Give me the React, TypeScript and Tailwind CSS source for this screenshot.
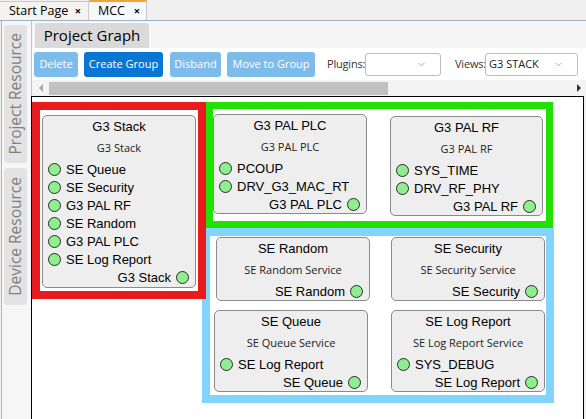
import { ChevronDown } from 'lucide-react';

type NodeProps = {
  title: string;
  subtitle: string;
  inputs: string[];
  output: string;
  pos: string;
};

const Port = () => (
  <span className="inline-block w-[13px] h-[13px] rounded-full border border-[#2a2a2a] bg-[#90ee90] shrink-0" />
);

const Node = ({ title, subtitle, inputs, output, pos }: NodeProps) => (
  <div
    className={`absolute ${pos} flex flex-col rounded-[5px] border border-[#8a8a8a] bg-[#eeeeee] font-['Liberation_Sans',Arial,sans-serif] text-[13px] text-black`}
  >
    <div className="h-[22px] leading-[22px] text-center">{title}</div>
    <div className="h-[20px] leading-[20px] text-center font-['Open_Sans',sans-serif] text-[11px] text-[#222]">
      {subtitle}
    </div>
    <div className="pt-[2px] flex flex-col">
      {inputs.map((name) => (
        <div className="h-[18px] flex items-center gap-[5px] pl-[5px]" key={name}>
          <Port />
          <span className="leading-none">{name}</span>
        </div>
      ))}
      <div className="h-[18px] flex items-center justify-end gap-[5px] pr-[6px]">
        <span className="leading-none">{output}</span>
        <Port />
      </div>
    </div>
  </div>
);

const ToolButton = ({ label, w, active = false }: { label: string; w: string; active?: boolean }) => (
  <button
    className={`${w} h-[25px] shrink-0 rounded-[3px] text-white text-[11px] flex items-center justify-center ${
      active ? 'bg-[#0a76d4]' : 'bg-[#7dbbea]'
    }`}
    type="button"
  >
    {label}
  </button>
);

const SideTab = ({ label, h }: { label: string; h: string }) => (
  <div
    className={`${h} w-[23px] rounded-[3px] bg-[#e3e3e3] flex items-center justify-center text-[15.5px] text-[#808080] font-['Open_Sans',sans-serif]`}
  >
    <span className="[writing-mode:vertical-rl] rotate-180 whitespace-nowrap">{label}</span>
  </div>
);

const App = () => {
  return (
    <div className="w-[586px] h-[419px] overflow-hidden bg-[#f0f0f0] flex flex-col font-['Open_Sans',sans-serif] text-[#222]">
      {/* document tabs */}
      <div className="h-[21px] shrink-0 flex items-end border-b border-[#9fb0c4] bg-[#f0f0f0]">
        <div className="h-[19px] w-[89px] flex items-center justify-between pl-[9px] pr-[7px] border-t border-r border-[#c9c9c9] bg-[#f4f3ef] text-[12.5px] text-black">
          <span>Start Page</span>
          <span className="text-[11px] font-bold">×</span>
        </div>
        <div className="h-[20px] w-[58px] flex items-center justify-between pl-[9px] pr-[6px] border-t-2 border-t-[#f2a338] border-r border-r-[#c9c9c9] bg-[#f6f8fb] text-[12.5px] text-black">
          <span>MCC</span>
          <span className="text-[11px] font-bold">×</span>
        </div>
      </div>

      <div className="flex-1 flex min-h-0">
        {/* side bar */}
        <div className="w-[30px] ml-[1px] shrink-0 border-l border-[#a9b8c8] bg-[#f6f6f6] flex flex-col gap-[5px] pl-[2px] pt-[4px]">
          <SideTab h="h-[138px]" label="Project Resource" />
          <SideTab h="h-[137px]" label="Device Resource" />
        </div>

        {/* main */}
        <div className="flex-1 flex flex-col min-w-0 border-l border-[#c4c4c4]">
          <div className="h-[27px] shrink-0 bg-[#f5f5f5] pl-[3px] pt-[2px]">
            <div className="w-[114px] h-[25px] rounded-t-[3px] bg-[#dadada] flex items-center justify-center text-[15px] text-black">
              Project Graph
            </div>
          </div>

          <div className="h-[32px] shrink-0 bg-white flex items-center gap-[6px] pl-[2px]">
            <ToolButton label="Delete" w="w-[44px]" />
            <ToolButton active label="Create Group" w="w-[79px]" />
            <div className="ml-[1px] flex gap-[6px]">
              <ToolButton label="Disband" w="w-[51px]" />
              <ToolButton label="Move to Group" w="w-[88px]" />
            </div>
            <div className="flex items-center ml-[6px] text-[11px] text-[#333] shrink-0">
              <span className="w-[38px] whitespace-nowrap tracking-[-0.2px]">Plugins:</span>
              <div className="w-[76px] h-[23px] rounded-[3px] border border-[#bdbdbd] bg-white flex items-center justify-end pr-[13px]">
                <ChevronDown className="text-[#8a8a8a]" size={11} strokeWidth={1.5} />
              </div>
            </div>
            <div className="flex items-center ml-[8px] text-[11px] text-[#333] shrink-0">
              <span className="w-[30px] whitespace-nowrap tracking-[-0.2px]">Views:</span>
              <div className="w-[93px] h-[23px] rounded-[3px] border border-[#bdbdbd] bg-white flex items-center justify-between pl-[3px] pr-[13px]">
                <span className="text-[11px] text-[#222]">G3 STACK</span>
                <ChevronDown className="text-[#8a8a8a]" size={11} strokeWidth={1.5} />
              </div>
            </div>
          </div>

          {/* horizontal scroll bar */}
          <div className="h-[16px] shrink-0 bg-[#f3f3f3] flex items-center">
            <span className="ml-[7px] w-0 h-0 border-y-[4px] border-y-transparent border-r-[4px] border-r-[#a8a8a8]" />
            <span className="ml-[6px] w-[339px] h-[13px] bg-[#c1c1c1]" />
            <span className="flex-1" />
            <span className="mr-[5px] w-0 h-0 border-y-[4px] border-y-transparent border-l-[4px] border-l-[#333]" />
          </div>

          {/* graph canvas */}
          <div className="relative flex-1 mr-[2px] -ml-px border-l border-t border-r border-black bg-white">
            <div className="absolute left-[170px] top-[131px] w-[352px] h-[175px] border-[8px] border-[#82d4fc]" />
            <div className="absolute left-[174px] top-[5px] w-[347px] h-[126px] border-[7px] border-[#22e000]" />
            <div className="absolute left-0 top-[5px] w-[174px] h-[197px] border-[8px] border-[#e81c1c]" />

            <Node
              inputs={['SE Queue', 'SE Security', 'G3 PAL RF', 'SE Random', 'G3 PAL PLC', 'SE Log Report']}
              output="G3 Stack"
              pos="left-[10px] top-[18px] w-[154px] h-[173px]"
              subtitle="G3 Stack"
              title="G3 Stack"
            />
            <Node
              inputs={['PCOUP', 'DRV_G3_MAC_RT']}
              output="G3 PAL PLC"
              pos="left-[181px] top-[17px] w-[154px] h-[100px]"
              subtitle="G3 PAL PLC"
              title="G3 PAL PLC"
            />
            <Node
              inputs={['SYS_TIME', 'DRV_RF_PHY']}
              output="G3 PAL RF"
              pos="left-[358px] top-[19px] w-[153px] h-[100px]"
              subtitle="G3 PAL RF"
              title="G3 PAL RF"
            />
            <Node
              inputs={[]}
              output="SE Random"
              pos="left-[184px] top-[140px] w-[154px] h-[64px]"
              subtitle="SE Random Service"
              title="SE Random"
            />
            <Node
              inputs={[]}
              output="SE Security"
              pos="left-[359px] top-[140px] w-[154px] h-[64px]"
              subtitle="SE Security Service"
              title="SE Security"
            />
            <Node
              inputs={['SE Log Report']}
              output="SE Queue"
              pos="left-[182px] top-[213px] w-[154px] h-[82px]"
              subtitle="SE Queue Service"
              title="SE Queue"
            />
            <Node
              inputs={['SYS_DEBUG']}
              output="SE Log Report"
              pos="left-[359px] top-[213px] w-[154px] h-[82px]"
              subtitle="SE Log Report Service"
              title="SE Log Report"
            />
          </div>
        </div>
      </div>
    </div>
  );
};

export default App;
